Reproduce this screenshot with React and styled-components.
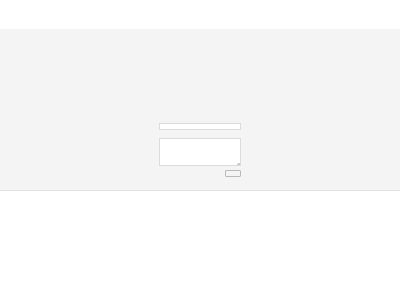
import React from "react";
import styled, { createGlobalStyle } from "styled-components";

const Global = createGlobalStyle`
  html, body { margin: 0; padding: 0; background: #ffffff; }
  body { font-family: "Liberation Sans", Arial, sans-serif; }
`;

const Page = styled.div`
  width: 400px;
  height: 300px;
  display: flex;
  flex-direction: column;
  background: #ffffff;
`;

const TopBar = styled.header`
  height: 29px;
  background: #ffffff;
`;

const Band = styled.section`
  height: 162px;
  background: #f4f4f4;
  border-bottom: 1px solid #e3e3e3;
  display: flex;
  justify-content: center;
  padding-top: 94px;
  box-sizing: border-box;
`;

const Form = styled.form`
  width: 82px;
  display: flex;
  flex-direction: column;
  align-items: stretch;
`;

const Field = styled.input`
  box-sizing: border-box;
  height: 7px;
  width: 100%;
  margin: 0 0 8px;
  padding: 0;
  border: 1px solid #dcdcdc;
  background: #ffffff;
  outline: none;
`;

const Area = styled.textarea`
  box-sizing: border-box;
  height: 28px;
  width: 100%;
  margin: 0 0 4px;
  padding: 0;
  border: 1px solid #dcdcdc;
  background: #ffffff;
  resize: none;
  outline: none;
  display: block;
`;

const AreaWrap = styled.div`
  position: relative;
`;

const Grip = styled.span`
  position: absolute;
  right: 1px;
  bottom: 5px;
  width: 3px;
  height: 3px;
  background: linear-gradient(135deg, transparent 50%, #c8c8c8 50%);
`;

const Submit = styled.button`
  align-self: flex-end;
  box-sizing: border-box;
  width: 16px;
  height: 7px;
  padding: 0;
  border: 1px solid #b9b9b9;
  border-radius: 1px;
  background: #f4f4f4;
`;

const Content = styled.main`
  flex: 1;
  background: #ffffff;
`;

export default function App() {
  return (
    <>
      <Global />
      <Page>
        <TopBar />
        <Band>
          <Form onSubmit={(e) => e.preventDefault()}>
            <Field type="text" aria-label="Name" />
            <AreaWrap>
              <Area aria-label="Message" />
              <Grip />
            </AreaWrap>
            <Submit type="submit" aria-label="Send" />
          </Form>
        </Band>
        <Content />
      </Page>
    </>
  );
}
